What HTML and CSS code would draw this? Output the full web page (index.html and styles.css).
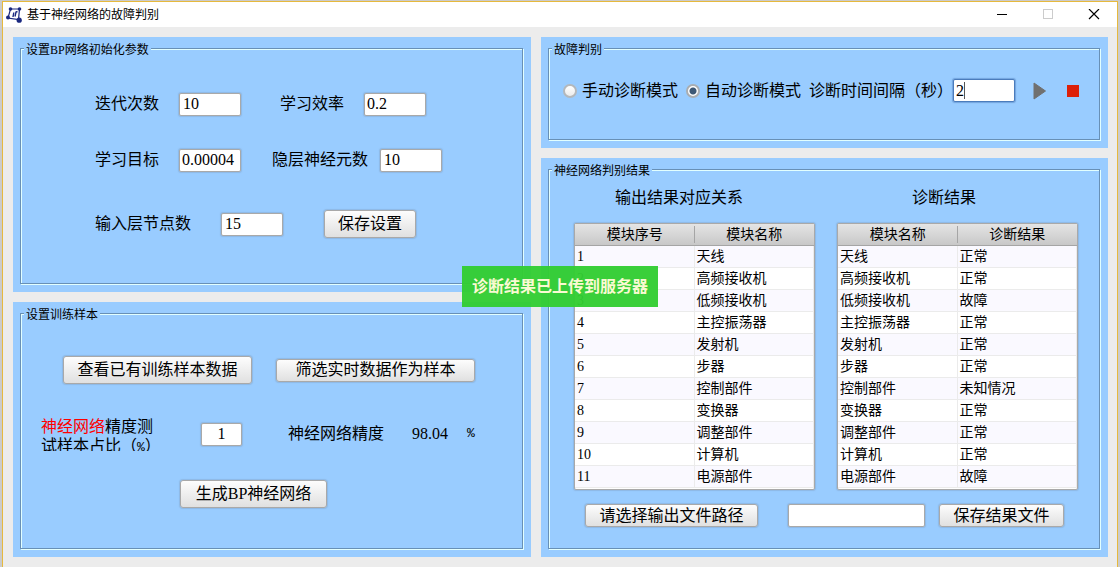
FILE: index.html
```html
<!DOCTYPE html>
<html lang="zh-CN">
<head>
<meta charset="utf-8">
<title>基于神经网络的故障判别</title>
<link rel="stylesheet" href="styles.css">
</head>
<body>
<div class="window">
  <header class="titlebar">
    <svg class="logo" viewBox="0 0 16 16" aria-hidden="true">
      <path d="M4.500 2H13.500L12.500 12.500L2 11Z" fill="none" stroke="#1a2880" stroke-width="1.200"/>
      <path d="M7 10L7.800 5.500M9 9.500L10 5L11.500 4.500" fill="none" stroke="#1a2880" stroke-width="1.400"/>
      <circle cx="4.500" cy="2" r="1.800" fill="#1a2880"/>
      <circle cx="13.500" cy="2" r="1.800" fill="#1a2880"/>
      <circle cx="2" cy="10.500" r="2" fill="#1a2880"/>
      <circle cx="13.200" cy="13.200" r="2.600" fill="#1a2880"/>
    </svg>
    <h1 class="title">基于神经网络的故障判别</h1>
    <div class="window-controls">
      <button class="control" type="button" aria-label="最小化"><svg viewBox="0 0 12 12"><path d="M1 5.500H11" stroke="#000"/></svg></button>
      <button class="control" type="button" aria-label="最大化" disabled><svg viewBox="0 0 12 12"><rect x="1.500" y="0.500" width="9" height="9" fill="none" stroke="#ccc"/></svg></button>
      <button class="control" type="button" aria-label="关闭"><svg viewBox="0 0 12 12"><path d="M1 0L11 10M11 0L1 10" stroke="#000" stroke-width="1.200"/></svg></button>
    </div>
  </header>

  <main class="workspace">
    <div class="column column-setup">
      <section class="panel">
        <fieldset class="group">
          <legend>设置BP网络初始化参数</legend>
          <div class="params">
            <div class="row">
              <label for="iterations">迭代次数</label>
              <input class="field" id="iterations" type="text" value="10">
              <label class="rate-label" for="rate">学习效率</label>
              <input class="field field-tight" id="rate" type="text" value="0.2">
            </div>
            <div class="row">
              <label for="goal">学习目标</label>
              <input class="field field-tight" id="goal" type="text" value="0.00004">
              <label class="hidden-label" for="hidden">隐层神经元数</label>
              <input class="field" id="hidden" type="text" value="10">
            </div>
            <div class="row row-last">
              <label class="nodes-label" for="nodes">输入层节点数</label>
              <input class="field" id="nodes" type="text" value="15">
              <button class="button button-save" type="button">保存设置</button>
            </div>
          </div>
        </fieldset>
      </section>

      <section class="panel">
        <fieldset class="group">
          <legend>设置训练样本</legend>
          <div class="training">
            <div class="row sample-row">
              <button class="button button-view" type="button">查看已有训练样本数据</button>
              <button class="button button-short button-filter" type="button">筛选实时数据作为样本</button>
            </div>
            <div class="row accuracy-row">
              <label class="ratio-label" for="ratio"><span class="accent">神经网络</span>精度测试样本占比（<span class="percent">%</span>）</label>
              <input class="field field-ratio" id="ratio" type="text" value="1">
              <span class="accuracy-label">神经网络精度</span>
              <output class="accuracy">98.04</output>
              <span class="percent">%</span>
            </div>
            <div class="row generate-row">
              <button class="button button-generate" type="button">生成BP神经网络</button>
            </div>
          </div>
        </fieldset>
      </section>
    </div>

    <div class="column column-diagnosis">
      <section class="panel">
        <fieldset class="group">
          <legend>故障判别</legend>
          <div class="modes">
            <label class="mode"><input class="radio" type="radio" name="mode">手动诊断模式</label>
            <label class="mode"><input class="radio" type="radio" name="mode" checked>自动诊断模式</label>
            <label class="interval"><span>诊断时间间隔（秒）</span><span class="focus-box"><input class="field field-focus" type="text" value="2"><i class="caret"></i></span></label>
            <button class="icon-button play" type="button" aria-label="开始"><svg viewBox="0 0 14 18"><path d="M1 1L12.500 9L1 17Z" fill="#707070" stroke="#707070" stroke-linejoin="round"/></svg></button>
            <button class="icon-button stop" type="button" aria-label="停止"><svg viewBox="0 0 12 12"><rect width="12" height="12" fill="#dd1f08"/></svg></button>
          </div>
        </fieldset>
      </section>

      <section class="panel">
        <fieldset class="group">
          <legend>神经网络判别结果</legend>
          <div class="results">
            <div class="tables">
              <div class="result">
                <h2 class="caption caption-map">输出结果对应关系</h2>
                <div class="table-box">
                  <table class="table">
                    <thead><tr><th>模块序号</th><th>模块名称</th></tr></thead>
                    <tbody>
                      <tr><td>1</td><td>天线</td></tr>
                      <tr><td>2</td><td>高频接收机</td></tr>
                      <tr><td>3</td><td>低频接收机</td></tr>
                      <tr><td>4</td><td>主控振荡器</td></tr>
                      <tr><td>5</td><td>发射机</td></tr>
                      <tr><td>6</td><td>步器</td></tr>
                      <tr><td>7</td><td>控制部件</td></tr>
                      <tr><td>8</td><td>变换器</td></tr>
                      <tr><td>9</td><td>调整部件</td></tr>
                      <tr><td>10</td><td>计算机</td></tr>
                      <tr><td>11</td><td>电源部件</td></tr>
                    </tbody>
                  </table>
                </div>
              </div>
              <div class="result">
                <h2 class="caption caption-result">诊断结果</h2>
                <div class="table-box">
                  <table class="table">
                    <thead><tr><th>模块名称</th><th>诊断结果</th></tr></thead>
                    <tbody>
                      <tr><td>天线</td><td>正常</td></tr>
                      <tr><td>高频接收机</td><td>正常</td></tr>
                      <tr><td>低频接收机</td><td>故障</td></tr>
                      <tr><td>主控振荡器</td><td>正常</td></tr>
                      <tr><td>发射机</td><td>正常</td></tr>
                      <tr><td>步器</td><td>正常</td></tr>
                      <tr><td>控制部件</td><td>未知情况</td></tr>
                      <tr><td>变换器</td><td>正常</td></tr>
                      <tr><td>调整部件</td><td>正常</td></tr>
                      <tr><td>计算机</td><td>正常</td></tr>
                      <tr><td>电源部件</td><td>故障</td></tr>
                    </tbody>
                  </table>
                </div>
              </div>
            </div>
            <div class="row export-row">
              <button class="button button-short button-path" type="button">请选择输出文件路径</button>
              <input class="field field-path" type="text" aria-label="输出文件路径">
              <button class="button button-short button-export" type="button">保存结果文件</button>
            </div>
          </div>
        </fieldset>
      </section>
    </div>
  </main>
  <div class="toast" role="status">诊断结果已上传到服务器</div>
</div>
</body>
</html>
```

FILE: styles.css
```css
* {
  box-sizing: border-box;
}

body {
  display: flex;
  min-height: 100vh;
  margin: 0;
  padding: 1px 2px 0;
  background: #cbcbcb;
  color: #000;
  font-family: "Liberation Serif", "Noto Sans CJK SC", sans-serif;
  font-size: 16px;
  font-weight: 400;
  line-height: 20px;
}

button,
input {
  font: inherit;
  color: inherit;
}

.window {
  position: relative;
  display: flex;
  flex: 1;
  flex-direction: column;
  border: 1px solid #e6b93d;
  border-bottom: 0;
  background: #ececec;
}

.titlebar {
  display: flex;
  align-items: center;
  height: 25px;
  padding: 0 17px 0 3px;
  background: #fff;
}

.logo {
  width: 16px;
  height: 16px;
}

.title {
  flex: 1;
  margin: 0 0 0 5px;
  font-size: 12px;
  font-weight: 400;
  line-height: 20px;
}

.window-controls {
  display: flex;
  gap: 34px;
}

.control,
.icon-button {
  display: flex;
  padding: 0;
  border: 0;
  background: none;
}

.control svg {
  width: 12px;
  height: 12px;
}

.workspace {
  display: grid;
  flex: 1;
  grid-template-columns: 518fr 567fr;
  gap: 10px;
  padding: 10px 9px 10px 10px;
}

.column {
  display: grid;
  gap: 10px;
}

.column-setup {
  grid-template-rows: 1fr 1fr;
}

.column-diagnosis {
  grid-template-rows: 111fr 399fr;
}

.panel {
  display: flex;
  padding: 2px 8px 8px 7px;
  background: #99ccff;
}

.group {
  flex: 1;
  min-width: 0;
  margin: 0;
  padding: 0;
  border: 1px solid #6890b6;
  box-shadow: 1px 1px 0 #e2ffff, inset 1px 1px 0 #e2ffff;
}

.group legend {
  margin-left: 3px;
  padding: 3px 2px 0;
  background: #99ccff;
  font-size: 12px;
  font-weight: 400;
  line-height: 16px;
}

.row {
  display: flex;
  align-items: center;
}

.params {
  display: grid;
  gap: 24px;
  padding: 30px 0 0 74px;
}

.params .row {
  height: 32px;
}

.params label {
  margin-right: 20px;
  white-space: nowrap;
}

.params .rate-label {
  margin-left: 39px;
}

.params .hidden-label {
  margin-right: 12px;
  margin-left: 31px;
}

.params .nodes-label {
  margin-right: 30px;
}

.params .row-last {
  margin-top: 8px;
}

.field {
  width: 62px;
  height: 23px;
  padding: 0 3px;
  border: 1px solid #a9a9a9;
  border-radius: 2px;
  outline: 0;
  background: #fff;
  box-shadow: 0 0 1px 1px rgba(120, 140, 165, 0.3);
}

.field-tight {
  padding: 0 2px;
}

.button {
  height: 28px;
  padding: 0;
  border: 1px solid #a9a9a9;
  border-radius: 3px;
  background: linear-gradient(#fdfdfd, #e0e0e0);
  box-shadow: 0 0 1px 1px rgba(120, 140, 165, 0.3);
  white-space: nowrap;
}

.button-short {
  height: 23px;
}

.button-save {
  width: 92px;
  margin-left: 41px;
}

.training {
  padding: 33px 0 0 20px;
}

.sample-row {
  gap: 24px;
  padding-left: 22px;
}

.button-view {
  width: 189px;
}

.button-filter {
  width: 199px;
}

.accuracy-row {
  margin-top: 33px;
}

.ratio-label {
  width: 120px;
  height: 34px;
  margin-right: 40px;
  overflow: hidden;
  line-height: 19px;
}

.accent {
  color: #f00;
}

.percent {
  font-family: "Liberation Mono", monospace;
  font-size: 13px;
  line-height: 16px;
}

.field-ratio {
  width: 41px;
  text-align: center;
}

.accuracy-label {
  margin: 0 28px 0 46px;
}

.accuracy {
  width: 55px;
}

.generate-row {
  margin-top: 29px;
  padding-left: 139px;
}

.button-generate {
  width: 147px;
}

.modes {
  display: flex;
  align-items: center;
  padding: 21px 0 0 14px;
  white-space: nowrap;
}

.mode {
  display: flex;
  align-items: center;
  margin-right: 8px;
}

.radio {
  width: 14px;
  height: 14px;
  margin: 0 5px 0 0;
  border: 2px solid #b4b8bc;
  border-radius: 50%;
  appearance: none;
  background: linear-gradient(#fff, #ececec);
}

.radio:checked {
  border-color: #a9adb1;
  background: radial-gradient(circle, #3d5875 0 3px, #fff 4px);
}

.interval {
  display: flex;
  align-items: center;
}

.focus-box {
  position: relative;
  display: flex;
}

.field-focus {
  padding: 0 2px;
  border-color: #4b7cbc;
  box-shadow: 0 0 1px 1px rgba(75, 124, 188, 0.5);
}

.caret {
  position: absolute;
  top: 3px;
  left: 11px;
  width: 1px;
  height: 17px;
  background: #555;
}

.play {
  margin-left: 18px;
}

.play svg {
  width: 14px;
  height: 18px;
}

.stop {
  margin-left: 20px;
}

.stop svg {
  width: 12px;
  height: 12px;
}

.results {
  padding: 9px 21px 0 25px;
}

.tables {
  display: grid;
  grid-template-columns: 1fr 1fr;
  gap: 22px;
}

.caption {
  margin: 0 0 15px;
  font-size: 16px;
  font-weight: 400;
  line-height: 20px;
}

.caption-map {
  padding-left: 41px;
}

.caption-result {
  padding-left: 75px;
}

.table-box {
  padding-bottom: 1px;
  border: 1px solid #a9a9a9;
  border-radius: 2px;
  background: #fff;
  box-shadow: 0 0 1px 1px rgba(120, 140, 165, 0.3);
}

.table {
  width: 100%;
  border-spacing: 0;
  table-layout: fixed;
  font-size: 14px;
}

.table th {
  padding: 0;
  border-bottom: 1px solid #a5a5a5;
  background: linear-gradient(90deg, transparent calc(100% - 1px), #a5a5a5 0) 0 50% / 100% 17px no-repeat, linear-gradient(#e4e4e4, #c8c8c8);
  font-weight: 400;
  line-height: 21px;
}

.table th:last-child {
  background: linear-gradient(#e4e4e4, #c8c8c8);
}

.table td {
  padding: 0 2px;
  border-right: 1px solid #ebebeb;
  border-bottom: 1px solid #ebebeb;
  line-height: 21px;
}

.table tbody tr:nth-child(odd) {
  background: #faf9ff;
}

.export-row {
  margin-top: 14px;
  padding: 0 14px 0 11px;
}

.button-path {
  width: 173px;
}

.field-path {
  flex: 1;
  min-width: 0;
  margin: 0 14px 0 30px;
}

.button-export {
  width: 125px;
}

.toast {
  position: absolute;
  top: 264px;
  left: 459px;
  padding: 10px;
  background: rgba(50, 205, 50, 0.96);
  color: #fafad2;
  font-weight: 700;
  line-height: 21px;
  white-space: nowrap;
}
```
